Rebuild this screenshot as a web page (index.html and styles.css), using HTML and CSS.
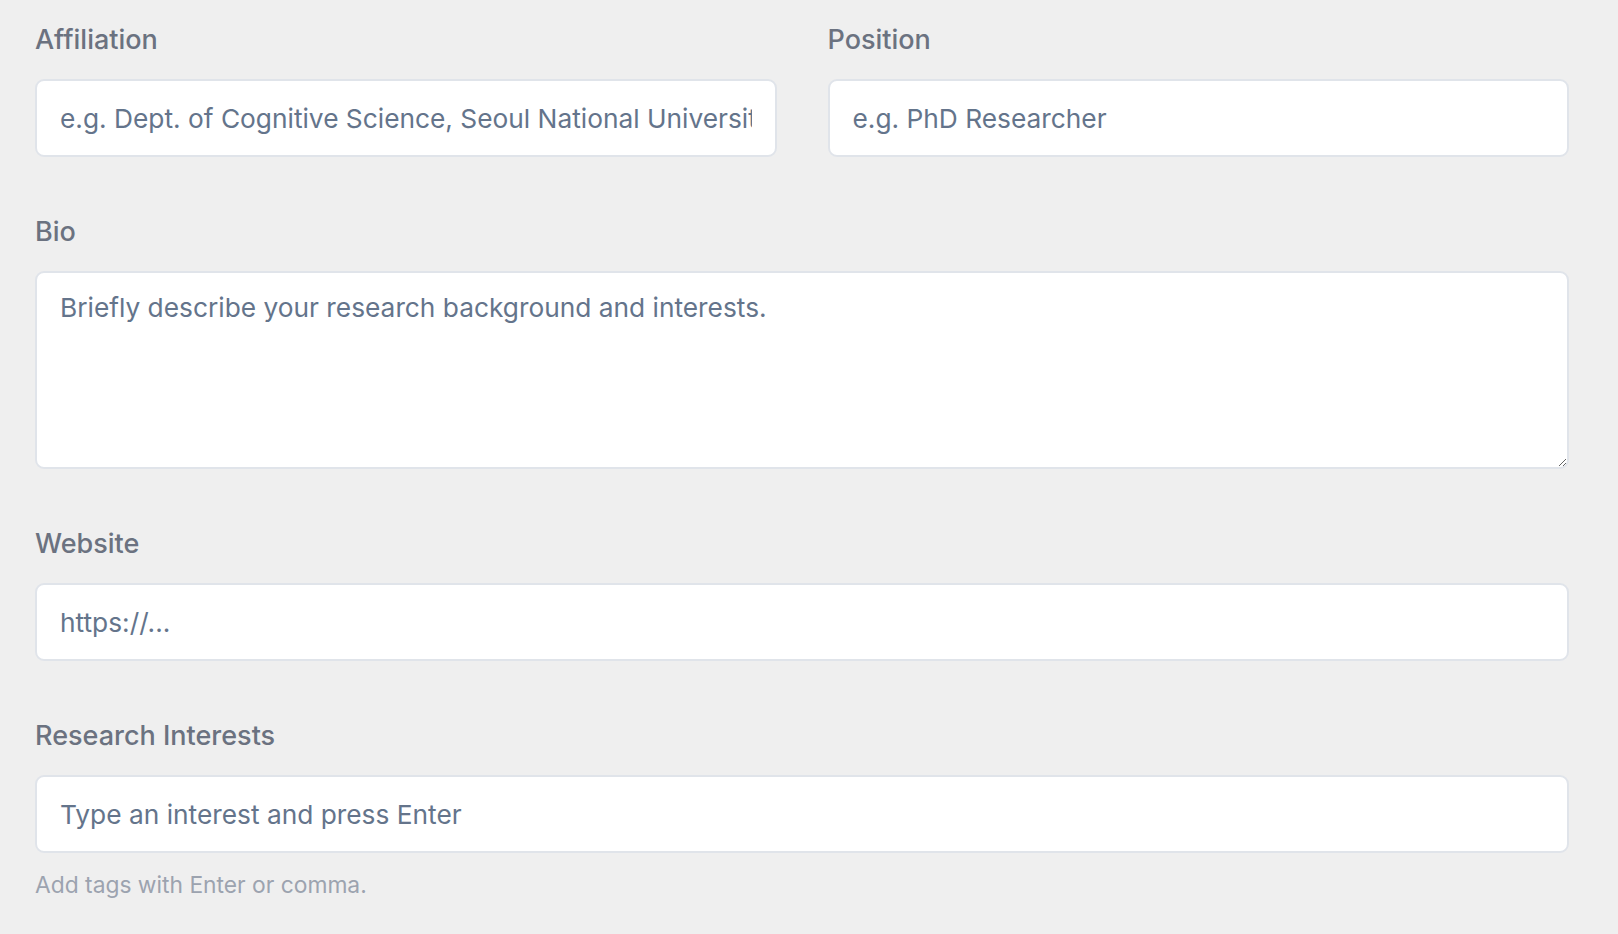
FILE: index.html
```html
<!DOCTYPE html>
<html lang="en">
<head>
  <meta charset="UTF-8" />
  <meta name="viewport" content="width=device-width, initial-scale=1.0" />
  <title>Edit Profile</title>
  <link rel="stylesheet" href="styles.css">
</head>
<body>
  <form class="profile-form">
    <div class="field-row">
      <div class="field">
        <label for="affiliation">Affiliation</label>
        <input type="text" id="affiliation" placeholder="e.g. Dept. of Cognitive Science, Seoul National University" />
      </div>
      <div class="field">
        <label for="position">Position</label>
        <input type="text" id="position" placeholder="e.g. PhD Researcher" />
      </div>
    </div>

    <div class="field">
      <label for="bio">Bio</label>
      <textarea id="bio" placeholder="Briefly describe your research background and interests."></textarea>
    </div>

    <div class="field">
      <label for="website">Website</label>
      <input type="url" id="website" placeholder="https://..." />
    </div>

    <div class="field">
      <label for="interests">Research Interests</label>
      <input type="text" id="interests" placeholder="Type an interest and press Enter" />
      <p class="hint">Add tags with Enter or comma.</p>
    </div>
  </form>
</body>
</html>
```

FILE: styles.css
```css
/* Global Styles */
* {
  margin: 0;
  padding: 0;
  box-sizing: border-box;
  font-family: 'Inter', 'Noto Sans', sans-serif;
}

body {
  background: #efefef;
  color: #374151;
}

/* Form Layout */
.profile-form {
  width: 1534px;
  margin-left: 35px;
  padding-top: 22px;
}

.field-row {
  display: grid;
  grid-template-columns: 1fr 1fr;
  gap: 51px;
}

.field {
  display: flex;
  flex-direction: column;
  margin-bottom: 57px;
}

.field label {
  font-size: 27px;
  line-height: 36px;
  font-weight: 500;
  color: #6b7280;
  margin-bottom: 21px;
}

/* Inputs */
.field input,
.field textarea {
  width: 100%;
  font-size: 26.3px;
  color: #334155;
  background-color: #ffffff;
  border: 2px solid #e0e4ea;
  border-radius: 9px;
  outline: none;
}

.field input {
  height: 78px;
  padding: 0 23px;
}

.field textarea {
  height: 198px;
  padding: 14px 23px;
  line-height: 42px;
  resize: vertical;
}

.field input::placeholder,
.field textarea::placeholder {
  color: #64748b;
  opacity: 1;
}

.hint {
  font-size: 22.8px;
  line-height: 32px;
  color: #9ca3af;
  margin-top: 16px;
}
```
